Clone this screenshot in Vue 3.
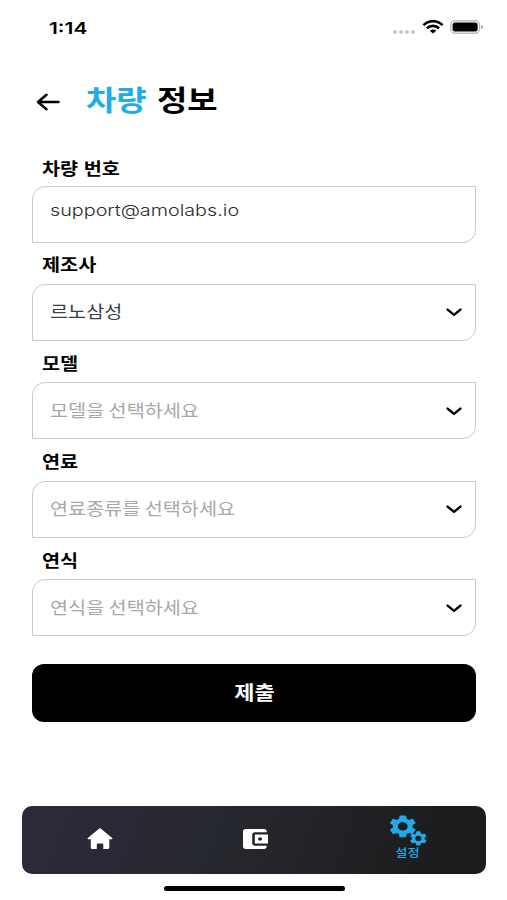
<script setup>
const fields = [
  { label: '차량 번호', value: 'support@amolabs.io', kind: 'email' },
  { label: '제조사', value: '르노삼성', kind: 'selected' },
  { label: '모델', value: '모델을 선택하세요', kind: 'placeholder' },
  { label: '연료', value: '연료종류를 선택하세요', kind: 'placeholder' },
  { label: '연식', value: '연식을 선택하세요', kind: 'placeholder' },
]
const gear = 'M19.14 12.94c.04-.3.06-.61.06-.94 0-.32-.02-.64-.07-.94l2.03-1.58c.18-.14.23-.41.12-.61l-1.92-3.32c-.12-.22-.37-.29-.59-.22l-2.39.96c-.5-.38-1.03-.7-1.62-.94l-.36-2.54c-.04-.24-.24-.41-.48-.41h-3.84c-.24 0-.43.17-.47.41l-.36 2.54c-.59.24-1.13.57-1.62.94l-2.39-.96c-.22-.08-.47 0-.59.22L2.74 8.87c-.12.21-.08.47.12.61l2.03 1.58c-.05.3-.09.63-.09.94s.02.64.07.94l-2.03 1.58c-.18.14-.23.41-.12.61l1.92 3.32c.12.22.37.29.59.22l2.39-.96c.5.38 1.03.7 1.62.94l.36 2.54c.05.24.24.41.48.41h3.84c.24 0 .44-.17.47-.41l.36-2.54c.59-.24 1.13-.56 1.62-.94l2.39.96c.22.08.47 0 .59-.22l1.92-3.32c.12-.22.07-.47-.12-.61zM12 15.6c-1.98 0-3.6-1.62-3.6-3.6s1.62-3.6 3.6-3.6 3.6 1.62 3.6 3.6-1.62 3.6-3.6 3.6z'
</script>

<template>
  <main class="screen">
    <header class="status">
      <span class="time wide">1:14</span>
      <div class="indicators">
        <svg class="dots" width="24" height="6" viewBox="0 0 24 6" fill="#c5c5c5">
          <circle cx="3" cy="3" r="2" /><circle cx="9" cy="3" r="2" /><circle cx="15" cy="3" r="2" /><circle cx="21" cy="3" r="2" />
        </svg>
        <svg class="wifi" width="22" height="14" viewBox="0 0 22 14" fill="none" stroke="#000" stroke-width="2.6">
          <path d="M1.4 5.1C6.7-.2 15.3-.2 20.6 5.1" />
          <path d="M4.9 8.3C8.3 5 13.7 5 17.1 8.3" />
          <path d="M11 13.5 7.8 10.7C9.5 9.1 12.5 9.1 14.2 10.7Z" fill="#000" stroke="none" />
        </svg>
        <svg width="34" height="14" viewBox="0 0 34 14">
          <rect x=".8" y=".8" width="28.6" height="12.4" rx="4" fill="#fff" stroke="#bdbdbd" stroke-width="1.4" />
          <rect x="2.6" y="2.5" width="25" height="9" rx="2.3" />
          <path d="M31 5.2Q33 5.6 33 7T31 8.8Z" fill="#999" />
        </svg>
      </div>
    </header>

    <div class="heading">
      <svg width="24" height="18" viewBox="0 0 24 18" fill="none" stroke="#000" stroke-width="2.5" stroke-linecap="round" stroke-linejoin="round">
        <path d="M22.5 9H2M10.5 1.8 2 9l8.5 7.2" />
      </svg>
      <h1 class="wide"><span class="accent">차량</span> 정보</h1>
    </div>

    <form class="form" @submit.prevent>
      <div v-for="field in fields" :key="field.label" class="field">
        <label><span class="wide">{{ field.label }}</span></label>
        <div class="control" :class="field.kind">
          <span class="wide value">{{ field.value }}</span>
          <svg v-if="field.kind !== 'email'" width="16" height="9" viewBox="0 0 16 9" fill="none" stroke="#000" stroke-width="2.4" stroke-linecap="round" stroke-linejoin="round">
            <path d="M1.6 1.6 8 6.9l6.4-5.3" />
          </svg>
        </div>
      </div>
      <button class="submit"><span class="wide">제출</span></button>
    </form>

    <nav class="tabs">
      <svg width="26" height="22" viewBox="0 0 26 22" fill="#fff">
        <path d="M11.7.9Q13-.2 14.3.9L25.2 10Q25.9 11 24.8 11.2H22.3V19.8Q22.3 21 21 21H16.3V16.5Q16.3 15.6 15.4 15.6H10.8Q9.8 15.6 9.8 16.5V21H5Q3.8 21 3.8 19.8V11.2H1.2Q.1 11 .8 10Z" />
      </svg>
      <svg class="wallet" width="25" height="20" viewBox="3 3 19 18" preserveAspectRatio="none" fill="#fff">
        <path d="M21 18v1c0 1.1-.9 2-2 2H5c-1.11 0-2-.9-2-2V5c0-1.1.89-2 2-2h14c1.1 0 2 .9 2 2v1h-9c-1.11 0-2 .9-2 2v8c0 1.1.89 2 2 2zm-9-2h10V8H12zm4-2.5c-.83 0-1.5-.67-1.5-1.5s.67-1.5 1.5-1.5 1.5.67 1.5 1.5-.67 1.5-1.5 1.5z" />
      </svg>
      <div class="settings">
        <svg width="38" height="32" viewBox="0 0 38 32" fill="#1fabeb">
          <path :d="gear" transform="translate(-2.65 -2.25) scale(1.37 1.14)" />
          <path :d="gear" transform="translate(18.9 14.55) scale(.87 .74)" />
        </svg>
        <span class="wide">설정</span>
      </div>
    </nav>
    <div class="home-indicator"></div>
  </main>
</template>

<style>
body { background: #fff; }
</style>

<style scoped>
* { box-sizing: border-box; }
.screen {
  width: 507px;
  height: 900px;
  display: flex;
  flex-direction: column;
  background: #fff;
  color: #000;
  overflow: hidden;
  font-family: "Noto Sans CJK KR", sans-serif;
}
.wide {
  display: inline-block;
  transform: scaleX(1.155);
  transform-origin: left center;
  white-space: pre;
}
.status {
  height: 54px;
  padding: 0 23px 0 49px;
  display: flex;
  align-items: center;
  justify-content: space-between;
}
.time { margin-top: 2px; font: 600 16.5px/20px Inter, sans-serif; transform: scaleX(1.27); }
.indicators { display: flex; align-items: center; }
.dots { margin: 9px 6px 0 0; }
.wifi { margin-right: 6px; }
.heading {
  height: 94px;
  padding: 0 36px;
  display: flex;
  align-items: center;
  gap: 26px;
}
.heading svg { margin-top: 2px; }
h1 { margin: 0 0 5px; font-size: 28.5px; font-weight: 700; line-height: 42px; word-spacing: 2.5px; }
.accent { color: #21abe8; }
.form { width: 444px; margin: 6px 0 0 32px; }
.field { height: 98.4px; }
label {
  display: block;
  height: 31.5px;
  padding: 0 0 0 10px;
  font-size: 17px;
  font-weight: 700;
  line-height: 23px;
  word-spacing: 1px;
}
.field:first-child label { padding-top: 2px; }
.control {
  height: 57px;
  padding: 0 13px 2px 17px;
  display: flex;
  align-items: center;
  justify-content: space-between;
  border: 1.4px solid #c9c9c9;
  border-radius: 13px 0 13px 0;
  font-size: 17px;
  line-height: 24px;
}
.control svg { margin-top: 3px; }
.email { color: #2c2c2c; font: 300 16px/24px Inter, sans-serif; padding-bottom: 8px; }
.email .value { transform: scaleX(1.235); }
.selected { color: #37414b; }
.placeholder { color: #a8a8a8; }
.submit {
  display: flex;
  align-items: center;
  justify-content: center;
  width: 444px;
  height: 58px;
  margin: 18px 0 0;
  padding: 0 0 2px;
  border: 0;
  border-radius: 12px;
  background: #000;
  color: #fff;
  font: 700 19px/28px "Noto Sans CJK KR", sans-serif;
}
.submit .wide { transform-origin: center; }
.tabs {
  width: 464px;
  height: 68px;
  margin: 84.5px 0 0 22px;
  padding: 0 59px 0 64.5px;
  display: flex;
  align-items: center;
  justify-content: space-between;
  border-radius: 10px;
  background: linear-gradient(110deg, #2c2b3b, #25272d 48%, #1c1d1e 85%);
}
.tabs > svg { margin-top: -2px; }
.tabs .wallet { margin-left: 9px; }
.settings {
  width: 38px;
  height: 50px;
  display: flex;
  flex-direction: column;
  align-items: center;
  color: #1fabeb;
  font-size: 11.5px;
  font-weight: 500;
  line-height: 14px;
}
.settings .wide { margin-top: -2px; transform-origin: center; }
.home-indicator { width: 181px; height: 5px; margin: 11.5px 0 0 164px; border-radius: 3px; background: #000; }
</style>
